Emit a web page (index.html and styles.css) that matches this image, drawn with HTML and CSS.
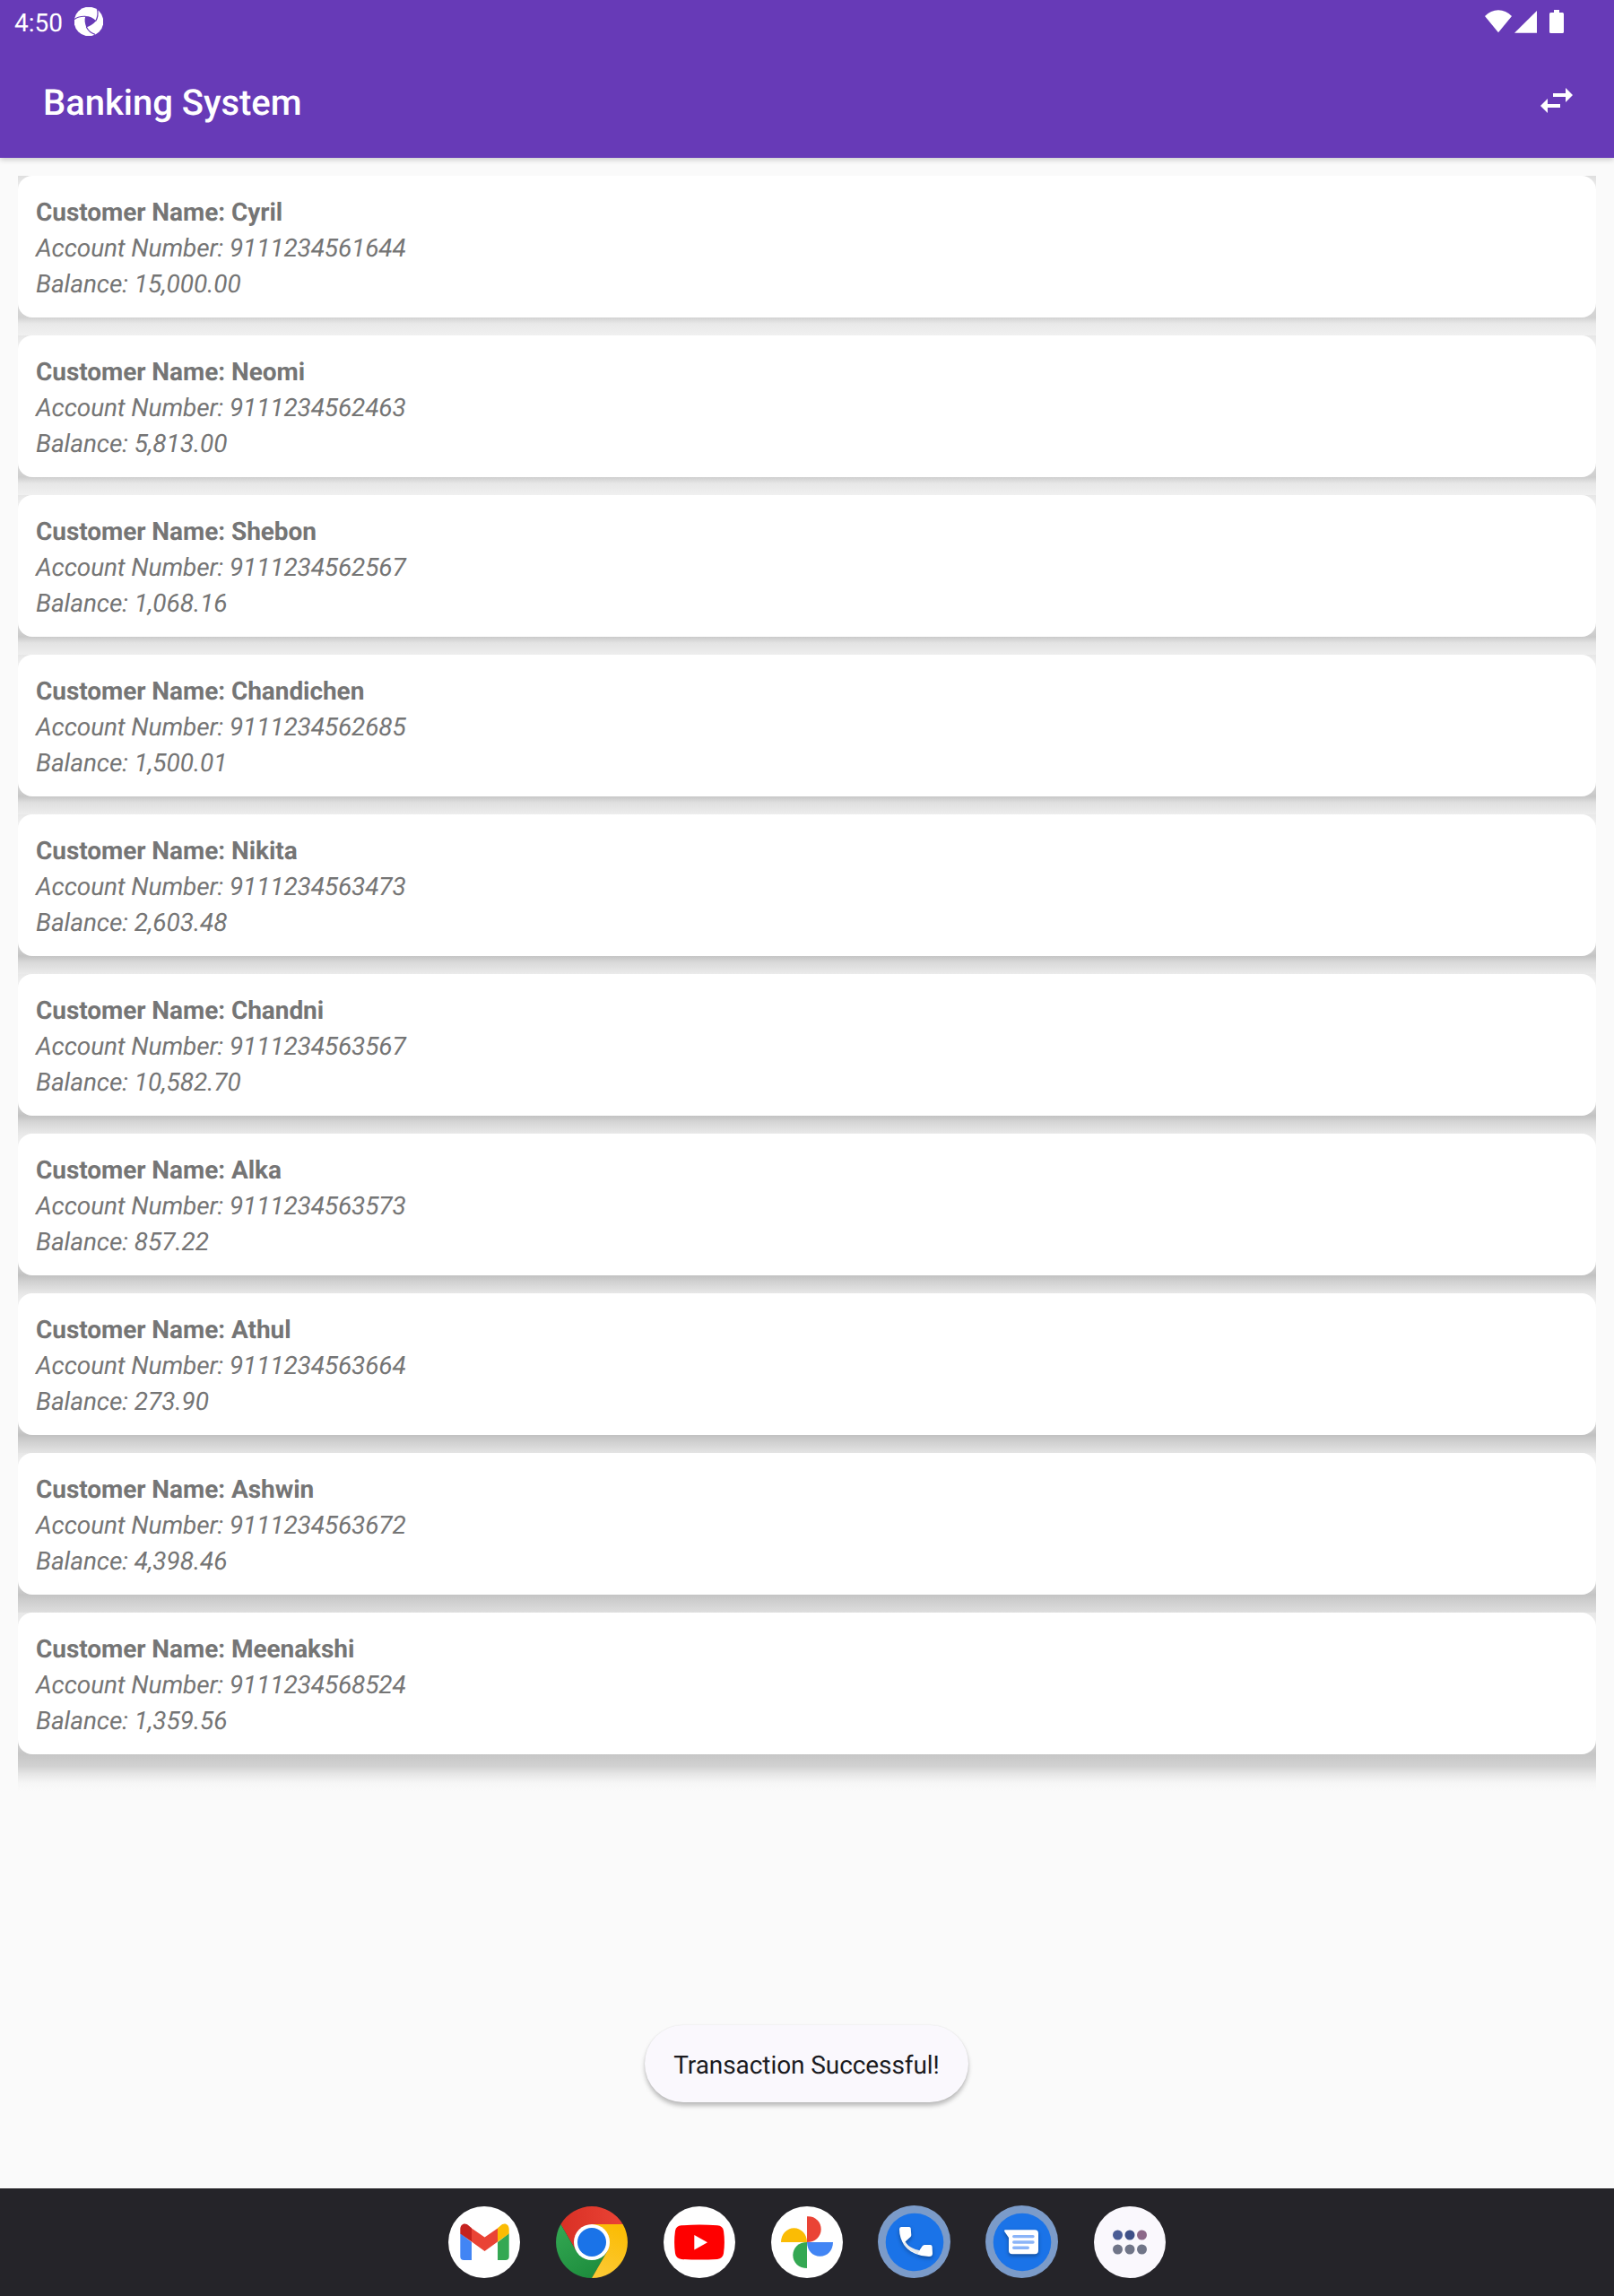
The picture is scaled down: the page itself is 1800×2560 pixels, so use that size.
FILE: index.html
```html
<!DOCTYPE html>
<html lang="en">
<head>
<meta charset="utf-8">
<title>Banking System</title>
<link rel="stylesheet" href="styles.css">
</head>
<body>
<div class="screen">
  <header class="top">
    <div class="status">
      <span class="clock">4:50</span>
      <svg class="notice" width="32" height="32" viewBox="0 0 32 32">
        <circle cx="16" cy="16" r="16.300" fill="#fff"/>
        <g fill="none" stroke="#673ab7" stroke-width="1.200">
          <path d="M12.500 10.300Q5 9.800 0 13.500"/>
          <path d="M23.800 15.300Q27 9.500 25.700 3"/>
          <path d="M13.300 22Q16.500 28.500 23 30.300"/>
        </g>
        <path fill="#673ab7" d="M13.300 22.500Q10.500 15.500 12.300 10Q19 10 24.300 15.300Q19.500 20.500 13.300 22.500z"/>
      </svg>
      <svg class="signals" width="88" height="26" viewBox="0 0 88 26">
        <path fill="#fff" d="M0 7Q6.500.2 15 .2T30 7L15 25.300z"/>
        <path fill="#fff" d="M33 25.700L58 1v24.700z"/>
        <path fill="#fff" d="M77 0h6v3h3.500q1.500 0 1.500 1.500V24.500q0 1.500-1.500 1.500h-13q-1.500 0-1.500-1.500V4.500Q72 3 73.500 3H77z"/>
      </svg>
    </div>
    <div class="appbar">
      <h1>Banking System</h1>
      <svg width="48" height="48" viewBox="0 0 24 24"><path fill="#fff" d="M6.990 11L3 15l3.990 4v-3H14v-2H6.990v-3zM21 9l-3.990-4v3H10v2h7.010v3L21 9z"/></svg>
    </div>
  </header>

  <main class="list">
    <div class="row" style="--above:#dedede;--near:#d2d2d2;--mid:#e9e9e9;--far:#f0f0f0"><article class="card"><strong>Customer Name: Cyril</strong><em class="account">Account Number: 9111234561644</em><em>Balance: 15,000.00</em></article></div>
    <div class="row" style="--above:#e6e6e6;--near:#cecece;--mid:#e7e7e7;--far:#f0f0f0"><article class="card"><strong>Customer Name: Neomi</strong><em class="account">Account Number: 9111234562463</em><em>Balance: 5,813.00</em></article></div>
    <div class="row" style="--above:#e6e6e6;--near:#cacaca;--mid:#e3e3e3;--far:#eeeeee"><article class="card"><strong>Customer Name: Shebon</strong><em class="account">Account Number: 9111234562567</em><em>Balance: 1,068.16</em></article></div>
    <div class="row" style="--above:#e6e6e6;--near:#c7c7c7;--mid:#dfdfdf;--far:#ededed"><article class="card"><strong>Customer Name: Chandichen</strong><em class="account">Account Number: 9111234562685</em><em>Balance: 1,500.01</em></article></div>
    <div class="row" style="--above:#e8e8e8;--near:#c4c4c4;--mid:#d9d9d9;--far:#ebebeb"><article class="card"><strong>Customer Name: Nikita</strong><em class="account">Account Number: 9111234563473</em><em>Balance: 2,603.48</em></article></div>
    <div class="row" style="--above:#e8e8e8;--near:#c2c2c2;--mid:#d5d5d5;--far:#e9e9e9"><article class="card"><strong>Customer Name: Chandni</strong><em class="account">Account Number: 9111234563567</em><em>Balance: 10,582.70</em></article></div>
    <div class="row" style="--above:#e8e8e8;--near:#c1c1c1;--mid:#d1d1d1;--far:#e7e7e7"><article class="card"><strong>Customer Name: Alka</strong><em class="account">Account Number: 9111234563573</em><em>Balance: 857.22</em></article></div>
    <div class="row" style="--above:#e7e7e7;--near:#c1c1c1;--mid:#cfcfcf;--far:#e4e4e4"><article class="card"><strong>Customer Name: Athul</strong><em class="account">Account Number: 9111234563664</em><em>Balance: 273.90</em></article></div>
    <div class="row" style="--above:#e7e7e7;--near:#c4c4c4;--mid:#cecece;--far:#dedede"><article class="card"><strong>Customer Name: Ashwin</strong><em class="account">Account Number: 9111234563672</em><em>Balance: 4,398.46</em></article></div>
    <div class="row last" style="--above:#e7e7e7"><article class="card"><strong>Customer Name: Meenakshi</strong><em class="account">Account Number: 9111234568524</em><em>Balance: 1,359.56</em></article></div>
  </main>

  <div class="toast">Transaction Successful!</div>

  <nav class="dock">
    <svg viewBox="0 0 80 80">
      <circle cx="40" cy="40" r="40" fill="#fff"/>
      <path fill="#4285f4" d="M13.300 30L26 40v20H17.300q-4 0-4-4z"/>
      <path fill="#34a853" d="M55 40L67.700 30v26q0 4-4 4H55z"/>
      <path fill="#ea4335" d="M26 24.500L40.500 34.500 55 24.500V39.500L40.500 50 26 39.500z"/>
      <path fill="#c5221f" d="M13.300 30.500V25.500C13.300 19.500 19 17.500 23 21.800L26 24.200V39.500z"/>
      <path fill="#fbbc04" d="M67.700 30.500V25.500C67.700 19.500 62 17.500 58 21.800L55 24.200V39.500z"/>
    </svg>
    <svg viewBox="0 0 80 80">
      <defs>
        <linearGradient id="red"><stop stop-color="#d93025"/><stop offset="1" stop-color="#ea4335"/></linearGradient>
        <linearGradient id="green" x1="0" y1="0" x2=".6" y2="1"><stop stop-color="#34a853"/><stop offset="1" stop-color="#1e8e3e"/></linearGradient>
        <linearGradient id="yellow" x1=".6" y1="0" x2=".3" y2="1"><stop stop-color="#fbbc04"/><stop offset="1" stop-color="#fcc934"/></linearGradient>
      </defs>
      <path fill="url(#red)" d="M5.400 20A40 40 0 0 1 74.600 20H40L22.700 50z"/>
      <path fill="url(#green)" d="M5.400 20A40 40 0 0 0 40 80L57.300 50 22.700 50z"/>
      <path fill="url(#yellow)" d="M40 80A40 40 0 0 0 74.600 20H40L57.300 50z"/>
      <circle cx="40" cy="40" r="20" fill="#fff"/>
      <circle cx="40" cy="40" r="16" fill="#1a73e8"/>
    </svg>
    <svg viewBox="0 0 80 80">
      <circle cx="40" cy="40" r="40" fill="#fff"/>
      <path fill="#f00" d="M20 21.300Q40 19.800 60 21.300Q66 21.500 67 27.500Q68.800 40 67 52.500Q66 58.500 60 58.900Q40 60.300 20 58.900Q14 58.500 13 52.500Q11.200 40 13 27.500Q14 21.500 20 21.300z"/>
      <path fill="#fff" d="M34.300 32v16.500L49 40.200z"/>
    </svg>
    <svg viewBox="0 0 80 80">
      <circle cx="40" cy="40" r="40" fill="#fff"/>
      <path fill="#ea4335" d="M40 11.200C49 10.500 55.700 17 55.700 25.500S49 40 40 40z"/>
      <path fill="#4285f4" d="M40 40H69C69 49 63 55.800 54.500 55.800S40 49 40 40z"/>
      <path fill="#34a853" d="M40 40V69C31 69 24.300 63 24.300 54.500S31 40 40 40z"/>
      <path fill="#fbbc04" d="M40 40H11C11 31 17.500 24.200 25.500 24.200S40 31 40 40z"/>
    </svg>
    <svg viewBox="0 0 80 80">
      <circle cx="39.500" cy="39.500" r="40.500" fill="#7b9bc9"/>
      <circle cx="40" cy="40" r="32.300" fill="#1a73e8"/>
      <path class="lift" fill="#fff" d="M25 23h9q1.500 0 1.700 1.500L36.300 32q0 1.300-1 2.200L29.500 39.500Q34 47 43 52.800L48.500 44.500Q49.500 43 51 43h6.500q2 0 2.100 2L60 52.500Q60 56 56 56C36 55.500 23 43 23 25.500Q23 23 25 23z"/>
      <path fill="#e8eaed" d="M29.500 39.500Q34 47 46 49.300L43 53.300Q33 49.500 27.500 42z"/>
    </svg>
    <svg viewBox="0 0 80 80">
      <circle cx="39.500" cy="39.500" r="40.500" fill="#7b9bc9"/>
      <circle cx="40" cy="40" r="32.300" fill="#1a73e8"/>
      <path class="lift" fill="#fff" d="M21 26.300H54q4 0 4 4V49.300q0 4-4 4H29q-4 0-4-4V35L20.200 28Q19.500 26.300 21 26.300z"/>
      <path stroke="#8ab4f8" stroke-width="3.400" stroke-linecap="round" d="M30.700 33.600H52M30.700 40H52M30.700 46.200H46.300"/>
    </svg>
    <svg viewBox="0 0 80 80">
      <circle cx="40" cy="40" r="40" fill="#faf8fd"/>
      <circle cx="26.500" cy="32" r="5.500" fill="#4b5d96"/>
      <circle cx="40" cy="32" r="5.500" fill="#3f5088"/>
      <circle cx="53.500" cy="32" r="5.500" fill="#8c6889"/>
      <g fill="#707588"><circle cx="26.500" cy="48" r="5.500"/><circle cx="40" cy="48" r="5.500"/><circle cx="53.500" cy="48" r="5.500"/></g>
    </svg>
  </nav>
</div>
</body>
</html>
```

FILE: styles.css
```css
* { box-sizing: border-box; }

body {
  margin: 0;
  font-family: Roboto, "Liberation Sans", sans-serif;
  font-size: 28px;
  text-rendering: geometricPrecision;
}

.screen {
  width: 1800px;
  height: 2560px;
  display: flex;
  flex-direction: column;
  background: #fafafa;
  overflow: hidden;
}

.top {
  height: 176px;
  flex: none;
  background: #673ab7;
  color: #fff;
  box-shadow: 0 2px 6px rgba(0, 0, 0, .2);
}

.status {
  height: 48px;
  display: flex;
  align-items: center;
  padding: 0 56px 0 16px;
}

.clock { line-height: 44px; padding-top: 4px; }
.notice { margin-left: 13px; }
.signals { margin-left: auto; }

.appbar {
  height: 128px;
  display: flex;
  align-items: center;
  justify-content: space-between;
  padding: 0 40px 0 48px;
}

h1 {
  margin: 6px 0 0;
  font-size: 40px;
  font-weight: 500;
  line-height: 48px;
  letter-spacing: -.03px;
}

.list {
  flex: 1;
  padding: 20px 20px 0;
}

/* Stacked card shadows, cut off at the sides of the list. */
.row {
  height: 178px;
  background: linear-gradient(var(--above) 0, #fafafa 22px, #fafafa 120px, #dadada 142px, var(--near) 158px, var(--mid) 165px, var(--far) 178px);
}

.row.last {
  height: 202px;
  background: linear-gradient(var(--above) 0, #f4f4f4 22px, #f4f4f4 120px, #d4d4d4 142px, #c6c6c6 158px, #d1d1d1 171px, #e6e6e6 180px, #f6f6f6 190px, #fafafa 199px);
}

.card {
  height: 158px;
  display: flex;
  flex-direction: column;
  padding: 21px 20px 17px;
  border-radius: 16px;
  background: #fff;
  color: #757575;
  line-height: 40px;
}

.card strong {
  font-weight: 700;
  letter-spacing: -.06px;
}

.card em { letter-spacing: -.05px; }
.card .account { letter-spacing: -.13px; }

.toast {
  align-self: center;
  width: 361px;
  height: 86px;
  margin: 0 1px 96px 0;
  border-radius: 43px;
  background: #faf8fd;
  color: #1b1b1f;
  line-height: 90px;
  letter-spacing: -.08px;
  text-align: center;
  box-shadow: 0 4px 5px rgba(0, 0, 0, .25), 0 0 2px rgba(0, 0, 0, .08);
}

.dock {
  height: 120px;
  flex: none;
  display: flex;
  align-items: center;
  justify-content: center;
  gap: 40px;
  background: #252429;
}

.dock svg {
  width: 80px;
  height: 80px;
  overflow: visible;
}

.lift { filter: drop-shadow(0 2px 2px rgba(0, 0, 0, .35)); }
```
